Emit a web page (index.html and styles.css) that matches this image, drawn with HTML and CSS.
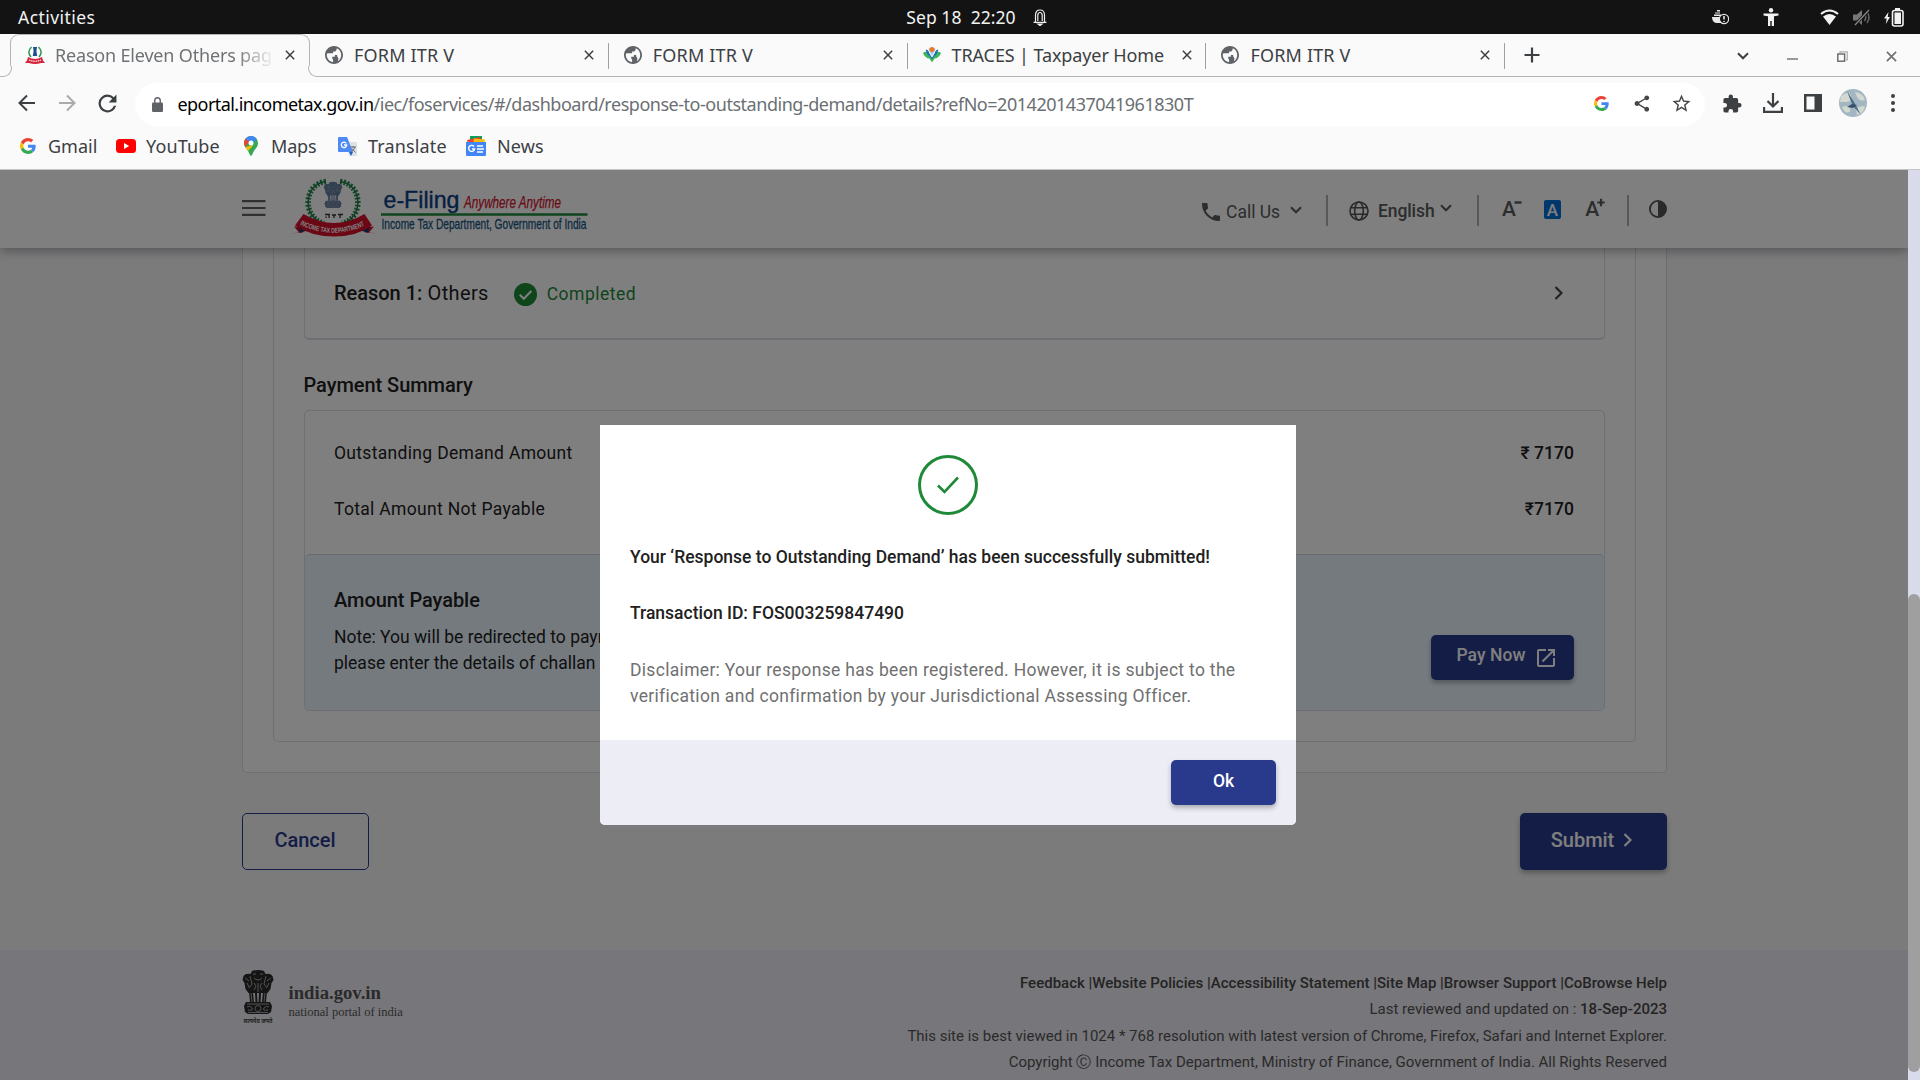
FILE: index.html
```html
<!DOCTYPE html>
<html lang="en">
<head>
<meta charset="utf-8">
<title>Response to Outstanding Demand</title>
<link rel="stylesheet" href="styles.css">
</head>
<body>
<svg class="defs" aria-hidden="true">
  <symbol id="i-world" viewBox="2 2 20 20"><path d="M12 2C6.480 2 2 6.480 2 12s4.480 10 10 10 10-4.480 10-10S17.520 2 12 2zm-1 17.930c-3.950-.49-7-3.850-7-7.930 0-.62.08-1.210.21-1.790L6.500 10H11l2 2v2h-3v2l1 1v2.930zM20 12c0 3-1.500 5.600-3.800 7l.8-3-1.500-2.500V12H13l-2-2V8h2.500l1.500-2V4.600c3 1.200 5 4 5 7.400z"/></symbol>
  <symbol id="i-x" viewBox="0 0 12 12"><path d="M1 1l10 10M11 1L1 11" fill="none" stroke="currentColor" stroke-width="1.800"/></symbol>
  <symbol id="i-chev" viewBox="0 0 12 8"><path d="M1 1.300l5 5 5-5" fill="none" stroke="currentColor" stroke-width="2"/></symbol>
  <symbol id="i-next" viewBox="0 0 9 14"><path d="M1.500 1l6 6-6 6" fill="none" stroke="currentColor" stroke-width="2.200"/></symbol>
  <symbol id="i-google" viewBox="0 0 48 48"><path fill="#ea4335" d="M24 9.500c3.540 0 6.710 1.220 9.210 3.600l6.850-6.850C35.900 2.380 30.470 0 24 0 14.620 0 6.510 5.380 2.560 13.220l7.980 6.190C12.430 13.720 17.740 9.500 24 9.500z"/><path fill="#4285f4" d="M46.980 24.550c0-1.570-.15-3.090-.38-4.550H24v9.020h12.940c-.58 2.960-2.260 5.480-4.780 7.180l7.730 6c4.510-4.180 7.090-10.360 7.090-17.650z"/><path fill="#fbbc05" d="M10.530 28.590c-.48-1.450-.76-2.990-.76-4.590s.27-3.140.76-4.590l-7.980-6.190C.92 16.460 0 20.120 0 24c0 3.880.92 7.540 2.560 10.780l7.970-6.190z"/><path fill="#34a853" d="M24 48c6.480 0 11.930-2.130 15.890-5.810l-7.730-6c-2.150 1.450-4.920 2.300-8.160 2.300-6.260 0-11.570-4.220-13.470-9.910l-7.980 6.190C6.510 42.620 14.620 48 24 48z"/></symbol>
  <symbol id="i-lions" viewBox="0 0 32 48">
    <path d="M10 1q6-2 12 0l1.500 3q5-1 7 2l1 4-2 3-1 6-3 4h-19l-3-4-1-6-2-3 1-4q2-3 7-2z"/>
    <path d="M7 22h4l1 10H8zM13 23h2l.5 10h-2zM17 23h2l-.5 10h-2zM21 22h4l-1 10h-4z"/>
    <path d="M4 32h24l2 4-1 6-3 2H6l-3-2-1-6z"/>
    <g class="lions-cut" fill="none" stroke-width="1"><path d="M11 4h3M18 4h3M12 8q4 4 8 0M3 8l4 3M29 8l-4 3M8 6l2 8-3 4M24 6l-2 8 3 4M12 13l2 3-2 4M20 13l-2 3 2 4M16 13v9M5 13l2 4M27 13l-2 4M9 23l1 9M23 23l-1 9M5 34h22M6 42.500h20"/><circle cx="16" cy="38.500" r="3"/><path d="M5 37q3-2 5 1t-4 2M27 37q-3-2-5 1t4 2"/></g>
  </symbol>
</svg>

<div class="desktop-bar">
  <span class="activities">Activities</span>
  <span class="clock">Sep 18&nbsp; 22:20
    <svg width="14" height="17" viewBox="0 0 14 17" fill="none" stroke="#eee" stroke-width="1.200"><path d="M2.500 13V6q0-5 4.500-5t4.500 5v7M4.800 12V6.500q0-3 2.200-3t2.200 3V12M.5 13.400h13"/><path d="M5 15h4l-2 1.500z" fill="#fff"/></svg>
  </span>
  <span class="tray">
    <svg width="17" height="15" viewBox="0 0 17 15"><path fill="#e8e8e8" d="M3 2.500h5v1H3zM2 4.500h7v1.500H2zM5 0h3v1.500H5zM0 7h10v6H4q-4-1-4-6z"/><circle cx="12" cy="9" r="4.600" fill="#131313" stroke="#e8e8e8" stroke-width="1.200"/><path d="M12 6v3.500M12 11v1" stroke="#fff" stroke-width="1.400"/></svg>
    <svg class="person" width="16" height="18" viewBox="0 0 16 18" fill="#f2f2f2"><circle cx="8" cy="2.300" r="2.200"/><path d="M.5 5.500h15v2l-4.500.7V18H8.700v-5H7.300v5H5V8.200L.5 7.500z"/></svg>
    <svg class="wifi" width="19" height="16" viewBox="0 0 19 16"><path d="M1 5q8.500-7 17 0" fill="none" stroke="#f2f2f2" stroke-width="2"/><path d="M3 7.500q6.500-5 13 0L9.500 16z" fill="#f2f2f2"/></svg>
    <svg class="mute" width="18" height="17" viewBox="0 0 18 17"><path d="M0 5.500h4L9 1v15l-5-4.500H0z" fill="#777"/><path d="M11.500 5q2.500 3.500 0 7M14 3q4 5.500 0 11" fill="none" stroke="#666" stroke-width="1.500"/><path d="M2 16L16 1" stroke="#131313" stroke-width="3"/><path d="M2 16L16 1" stroke="#888" stroke-width="1.300"/></svg>
    <svg class="battery" width="20" height="19" viewBox="0 0 20 19"><path d="M4.500 4L0 10.500h2.700L1.800 16 6 9H3.700z" fill="#f2f2f2"/><rect x="8.500" y="2.500" width="10.500" height="15.500" rx="2" fill="none" stroke="#f2f2f2" stroke-width="1.600"/><path d="M10.500 4.500h6.500v11.500h-6.500zM11 0h5v2h-5z" fill="#f2f2f2"/></svg>
  </span>
</div>

<div class="tab-strip">
  <div class="tab tab-active">
    <svg class="favicon" viewBox="0 0 20 20"><path d="M6.500 2Q1.500 7 6 12M13.500 2q5 5 .5 10" fill="none" stroke="#2f9a55" stroke-width="1.500"/><path d="M8 2h4l-.6 4 .8 5H7.800l.8-5z" fill="#1d4f92"/><path d="M3 12q7 4 14 0l1 3.500 2 2.500h-4q-6 2-12 0H0l2-2.500z" fill="#d6223c"/><path d="M4 15q6 2.500 12 0" stroke="#fff" stroke-width="1.200" stroke-dasharray="1.500 .7" fill="none"/></svg>
    <span class="tab-title fade">Reason Eleven Others pag</span>
    <svg class="tab-close"><use href="#i-x"/></svg>
  </div>
  <div class="tab"><svg class="favicon"><use href="#i-world"/></svg><span class="tab-title">FORM ITR V</span><svg class="tab-close"><use href="#i-x"/></svg></div>
  <div class="tab"><svg class="favicon"><use href="#i-world"/></svg><span class="tab-title">FORM ITR V</span><svg class="tab-close"><use href="#i-x"/></svg></div>
  <div class="tab"><svg class="favicon" viewBox="0 0 20 20"><path d="M0 8q3-3 5 0l5 5 5-5q2-3 5 0-2 5-7 6l-3 4-3-4Q2 13 0 8z" fill="#3fb65a"/><path d="M3 4q3 0 4 4l3 5 3-5q1-4 4-4-1 6-5 8l-2 3-2-3Q4 10 3 4z" fill="#1c6fb8"/><path d="M6 3l4 8 4-8q-4-2-8 0z" fill="#9dd0ee"/><circle cx="10" cy="4" r="2.800" fill="#ee7623"/></svg><span class="tab-title tight">TRACES | Taxpayer Home</span><svg class="tab-close"><use href="#i-x"/></svg></div>
  <div class="tab"><svg class="favicon"><use href="#i-world"/></svg><span class="tab-title">FORM ITR V</span><svg class="tab-close"><use href="#i-x"/></svg></div>
  <svg class="new-tab" width="16" height="16" viewBox="0 0 16 16"><path d="M8 .5v15M.5 8h15" stroke="#3c4043" stroke-width="2.200"/></svg>
  <div class="window-controls">
    <svg width="12" height="8" class="dark"><use href="#i-chev"/></svg>
    <svg width="11" height="9" viewBox="0 0 11 9"><path d="M0 7h11" stroke="#808080" stroke-width="1.600"/></svg>
    <svg width="11" height="11" viewBox="0 0 11 11"><path d="M3 2V.8h7.200v8H9" fill="none" stroke="#aaa" stroke-width="1.200"/><rect x=".8" y="3" width="6.800" height="7.200" fill="none" stroke="#666" stroke-width="1.400"/></svg>
    <svg width="11" height="11"><use href="#i-x"/></svg>
  </div>
</div>

<div class="toolbar">
  <div class="slots">
    <svg width="18" height="18" viewBox="0 0 18 18" fill="none" stroke="#3c4043" stroke-width="2"><path d="M17 9H2M9 1.500L1.500 9 9 16.500"/></svg>
    <svg width="18" height="18" viewBox="0 0 18 18" fill="none" stroke="#a9abad" stroke-width="2"><path d="M1 9h15M9 1.500L16.500 9 9 16.500"/></svg>
    <svg width="19" height="19" viewBox="3.500 3.500 17 17" fill="#3c4043"><path d="M17.650 6.350A7.958 7.958 0 0 0 12 4a8 8 0 1 0 7.730 10h-2.080A6 6 0 1 1 12 6c1.660 0 3.140.69 4.220 1.780L13 11h7V4l-2.350 2.350z"/></svg>
  </div>
  <div class="url-bar">
    <svg class="lock" width="11" height="15" viewBox="0 0 12 15" preserveAspectRatio="none"><path d="M1.300 5.500h9.400q1.300 0 1.300 1.300v6.900q0 1.300-1.300 1.300H1.300Q0 15 0 13.700V6.800Q0 5.500 1.300 5.500z" fill="#5f6368"/><path d="M3 6V3.800a3 3 0 0 1 6 0V6" fill="none" stroke="#5f6368" stroke-width="1.500"/></svg>
    <span class="url"><span class="host">eportal.incometax.gov.in</span><span class="path">/iec/foservices/#/dashboard/response-to-outstanding-demand/details?refNo=2014201437041961830T</span></span>
    <div class="slots">
      <svg width="15" height="15"><use href="#i-google"/></svg>
      <svg width="17" height="17" viewBox="2 1.500 19 21" fill="#444746"><path d="M18 16.080c-.76 0-1.440.3-1.960.77L8.910 12.700c.05-.23.09-.46.09-.7s-.04-.47-.09-.7l7.050-4.110c.54.5 1.250.81 2.040.81 1.660 0 3-1.340 3-3s-1.340-3-3-3-3 1.340-3 3c0 .24.04.47.09.7L8.040 9.810C7.500 9.310 6.790 9 6 9c-1.660 0-3 1.340-3 3s1.340 3 3 3c.79 0 1.500-.31 2.040-.81l7.120 4.160c-.05.21-.08.43-.08.650 0 1.610 1.310 2.920 2.920 2.920s2.920-1.310 2.920-2.920-1.310-2.920-2.920-2.920z"/></svg>
      <svg width="19" height="19" viewBox="1.500 1.500 21 21" fill="#444746"><path d="M22 9.240l-7.190-.62L12 2 9.190 8.630 2 9.240l5.460 4.730L5.820 21 12 17.270 18.180 21l-1.630-7.030L22 9.240zM12 15.400l-3.760 2.270 1-4.280-3.320-2.880 4.380-.38L12 6.100l1.710 4.040 4.380.38-3.320 2.880 1 4.280L12 15.400z"/></svg>
    </div>
  </div>
  <div class="slots">
    <svg width="19" height="19" viewBox="1.500 .5 22 22" fill="#3c4043"><path d="M20.500 11H19V7c0-1.100-.9-2-2-2h-4V3.500a2.500 2.500 0 0 0-5 0V5H4c-1.100 0-2 .9-2 2v3.800h1.500a2.700 2.700 0 0 1 0 5.400H2V20c0 1.100.9 2 2 2h3.800v-1.500a2.700 2.700 0 0 1 5.400 0V22H17c1.100 0 2-.9 2-2v-4h1.500a2.500 2.500 0 0 0 0-5z"/></svg>
    <svg width="20" height="20" viewBox="0 0 20 20" fill="none" stroke="#3c4043" stroke-width="2.200"><path d="M10 0v13M4.500 8l5.500 5.500L15.500 8M1.100 14v4.900h17.800V14"/></svg>
    <svg width="18" height="18" viewBox="0 0 18 18"><path fill="#3c4043" d="M0 0h18v18H0z"/><path fill="#fafafa" d="M2.500 2.500h8v13h-8z"/></svg>
    <svg width="28" height="28" viewBox="0 0 28 28"><circle cx="14" cy="14" r="14" fill="#a3b7c3"/><path d="M2 7q8-6 10 0t-6 6-5 0zM16 3q8 1 10 8-5 2-8-3zM3 18q7-3 8 2t-5 3zM17 20q6-5 9-2-2 7-8 8z" fill="#d3d8d0"/><path d="M8 2l7 11 7 13-8-9-3-7z" fill="#4a6c8a"/><path d="M8 18l5-3 5 1-4 3z" fill="#34506a"/></svg>
    <svg width="6" height="20" viewBox="0 0 6 20" fill="#3c4043"><circle cx="3" cy="3" r="2"/><circle cx="3" cy="10" r="2"/><circle cx="3" cy="17" r="2"/></svg>
  </div>
</div>

<div class="bookmarks">
  <span class="bm bm-gmail"><svg width="16" height="16"><use href="#i-google"/></svg>Gmail</span>
  <span class="bm bm-youtube"><svg width="20" height="14" viewBox="0 0 20 14"><rect width="20" height="14" rx="3.500" fill="#f00"/><path d="M8 4l5.200 3L8 10z" fill="#fff"/></svg>YouTube</span>
  <span class="bm bm-maps"><svg width="14" height="20" viewBox="0 0 14 20"><path d="M7 0a7 7 0 0 0-7 7c0 3 1.500 4.500 3 6.500C5 16 6 20 7 20s2-4 4-6.500c1.500-2 3-3.500 3-6.500a7 7 0 0 0-7-7z" fill="#34a853"/><path d="M1.600 2.500L5 5.500 1.500 11Q0 9 0 7q0-2.500 1.600-4.500z" fill="#ea4335"/><path d="M1.500 11L9.500 9 4 15z" fill="#fbbc04"/><path d="M1.600 2.500Q3.500 0 7 0q3.500 0 5.700 3L9 7 5 5.500z" fill="#4285f4"/><circle cx="7" cy="7" r="2.500" fill="#fff"/></svg>Maps</span>
  <span class="bm bm-translate"><svg width="19" height="19" viewBox="0 0 19 19"><path d="M8 5h10q1 0 1 1v12q0 1-1 1h-7z" fill="#dfe1e5"/><path d="M1 0h8l6 15H1q-1 0-1-1V1q0-1 1-1z" fill="#4c8bf5"/><path d="M11 15h4l-2 4z" fill="#1f5fc9"/><path d="M8.300 6.500A2.700 2.700 0 1 0 8.700 8H6" fill="none" stroke="#fff" stroke-width="1.300"/><path d="M12 10h6M15 9v1.500M17 10q-1 3-4 5M14 11.500l3.500 4" stroke="#6b7075" stroke-width="1" fill="none"/></svg>Translate</span>
  <span class="bm bm-news"><svg width="20" height="20" viewBox="0 0 20 20"><path d="M4 0h12v5H4z" fill="#0c9d58"/><path d="M1 4l13-3 2 7H2z" fill="#ea4335"/><path d="M8 2.500l11 1-1 5H7z" fill="#fbbc04"/><path d="M0 6h20v13q0 1-1 1H1q-1 0-1-1z" fill="#4285f4"/><path d="M8 10.500A3 3 0 1 0 8.600 13H6" fill="none" stroke="#fff" stroke-width="1.400"/><path d="M11 10h6M11 13h7M11 16h6" stroke="#fff" stroke-width="1.500"/></svg>News</span>
</div>

<div class="viewport">
  <div class="page">
    <header class="site-header">
      <svg class="menu" width="24" height="16" viewBox="0 0 24 16"><path d="M0 1.200h23.500M0 8h23.500M0 14.800h23.500" stroke="#636363" stroke-width="2.200"/></svg>
      <svg class="logo" width="296" height="60" viewBox="0 0 296 60">
        <path d="M33 1.500C10 4 9 38 31 43.500M47 1.500C70 4 71 38 49 43.500" fill="none" stroke="#2e8b57" stroke-width="5.500" stroke-dasharray="2 1.600"/>
        <path d="M33 1.500C10 4 9 38 31 43.500q9 2 18 0M47 1.500C70 4 71 38 49 43.500" fill="none" stroke="#1f7d46" stroke-width="1.400"/>
        <svg class="logo-lions" x="30.500" y="0" width="19" height="32"><use href="#i-lions" fill="#5f7ca3"/></svg>
        <path d="M32 34.500h5M39 35h4M45 34.500h5M33 36.500v1.500M36 35v3M41 35v3M47 35v3" stroke="#333" stroke-width="1.300"/>
        <path d="M-2 53.500l8-1-5-6 10 1-1 5zM84 53.500l-8-1 5-6-10 1 1 5z" fill="#d8102c"/>
        <path d="M5 46l8-2v7l-6 1.500zM77 46l-8-2v7l6 1.500z" fill="#17386f"/>
        <path d="M10.500 34Q41 52 71.500 34L79 45.500Q64 56.500 41 56.500 18 56.500 2 45.500z" fill="#d8102c"/>
        <path id="ribbon" d="M7 44.500Q41 61.500 76 43.500" fill="none"/>
        <text class="ribbon-text" textLength="67" lengthAdjust="spacingAndGlyphs"><textPath href="#ribbon">INCOME TAX DEPARTMENT</textPath></text>
        <text class="logo-name" x="90.500" y="27.500" textLength="76" lengthAdjust="spacingAndGlyphs">e-Filing</text>
        <text class="logo-tag" x="171" y="28" textLength="97" lengthAdjust="spacingAndGlyphs">Anywhere Anytime</text>
        <path d="M88 34.500h206.500" stroke="#1f8a3a" stroke-width="2.600"/>
        <text class="logo-dept" x="88.500" y="49" textLength="205" lengthAdjust="spacingAndGlyphs">Income Tax Department, Government of India</text>
      </svg>
      <div class="header-tools">
        <span class="tool call"><svg width="18" height="18" viewBox="3 3 18 18" fill="#5a5a5a"><path d="M6.620 10.790c1.440 2.830 3.760 5.140 6.590 6.590l2.200-2.200c.27-.27.67-.36 1.020-.24 1.120.37 2.330.57 3.570.57.55 0 1 .45 1 1V20c0 .55-.45 1-1 1-9.390 0-17-7.610-17-17 0-.55.45-1 1-1h3.500c.55 0 1 .45 1 1 0 1.250.2 2.450.57 3.570.11.35.03.74-.25 1.020l-2.200 2.200z"/></svg><span class="call-label">Call Us</span><svg width="12" height="8"><use href="#i-chev"/></svg></span>
        <span class="rule"></span>
        <span class="tool lang"><svg width="20" height="20" viewBox="0 0 20 20" fill="none" stroke="#555" stroke-width="1.600"><circle cx="10" cy="10" r="9"/><ellipse cx="10" cy="10" rx="4.300" ry="9"/><path d="M1.500 6.800h17M1.500 13.200h17"/></svg><b class="lang-label">English</b><svg class="lang-chev" width="12" height="8"><use href="#i-chev"/></svg></span>
        <span class="rule"></span>
        <span class="tool sizes"><span class="size">A<svg width="8" height="9" viewBox="0 0 8 9"><path d="M.5 4.500h7" stroke="#5a5a5a" stroke-width="2.400"/></svg></span><span class="size size-on">A</span><span class="size">A<svg width="8" height="9" viewBox="0 0 8 9"><path d="M.3 4.500h7.400M4 .8v7.400" stroke="#5a5a5a" stroke-width="2.200"/></svg></span></span>
        <span class="rule"></span>
        <svg class="contrast" width="18" height="18" viewBox="0 0 18 18"><circle cx="9" cy="9" r="8.100" fill="none" stroke="#555" stroke-width="1.800"/><path d="M9 1v16A8 8 0 0 0 9 1z" fill="#555"/></svg>
      </div>
    </header>

    <main class="outer-card">
      <div class="inner-card">
        <div class="reason"><span><b>Reason 1:</b> Others</span>
          <svg class="tick" width="23" height="23" viewBox="0 0 23 23"><circle cx="11.500" cy="11.500" r="11.500" fill="#1e8a37"/><path d="M5.800 11.800l4 4 7.500-7.800" fill="none" stroke="#fff" stroke-width="2"/></svg>
          <span class="completed">Completed</span>
          <svg class="go" width="9" height="14"><use href="#i-next"/></svg>
        </div>
        <h2>Payment Summary</h2>
        <section class="summary">
          <div class="row"><span>Outstanding Demand Amount</span><b>₹ 7170</b></div>
          <div class="row"><span>Total Amount Not Payable</span><b>₹7170</b></div>
          <div class="payable">
            <div class="payable-text">
              <h3>Amount Payable</h3>
              <p>Note: You will be redirected to payment gateway,<br>please enter the details of challan</p>
            </div>
            <button class="btn pay">Pay Now <svg width="18" height="18" viewBox="3 3 18 18" fill="#fff"><path d="M19 19H5V5h7V3H5a2 2 0 0 0-2 2v14a2 2 0 0 0 2 2h14c1.100 0 2-.9 2-2v-7h-2v7zM14 3v2h3.590l-9.830 9.830 1.410 1.410L19 6.410V10h2V3h-7z"/></svg></button>
          </div>
        </section>
      </div>
    </main>

    <div class="actions">
      <button class="btn cancel">Cancel</button>
      <button class="btn submit">Submit <svg width="9" height="14"><use href="#i-next"/></svg></button>
    </div>

    <footer class="site-footer">
      <div class="portal">
        <div class="emblem"><svg width="32" height="48"><use href="#i-lions" fill="#2a2a2a"/></svg><span>सत्यमेव जयते</span></div>
        <div class="portal-text"><strong>india.gov.in</strong><span>national portal of india</span></div>
      </div>
      <div class="legal">
        <p class="links"><b>Feedback |Website Policies |Accessibility Statement |Site Map |Browser Support |CoBrowse Help</b></p>
        <p>Last reviewed and updated on : <b>18-Sep-2023</b></p>
        <p>This site is best viewed in 1024 * 768 resolution with latest version of Chrome, Firefox, Safari and Internet Explorer.</p>
        <p>Copyright Ⓒ Income Tax Department, Ministry of Finance, Government of India. All Rights Reserved</p>
      </div>
    </footer>

    <div class="backdrop">
      <div class="dialog">
        <div class="dialog-body">
          <svg class="success" width="60" height="60" viewBox="0 0 60 60" fill="none" stroke="#1e8a37" stroke-width="3"><circle cx="30" cy="30" r="28.500"/><path d="M20 30.500l6.500 6.500L40 22.500" stroke-width="2.600"/></svg>
          <p class="strong">Your ‘Response to Outstanding Demand’ has been successfully submitted!</p>
          <p class="strong">Transaction ID: FOS003259847490</p>
          <p class="disclaimer">Disclaimer: Your response has been registered. However, it is subject to the verification and confirmation by your Jurisdictional Assessing Officer.</p>
        </div>
        <div class="dialog-foot"><button class="btn ok">Ok</button></div>
      </div>
    </div>
  </div>
  <div class="scrollbar"><div class="thumb"></div></div>
</div>
</body>
</html>
```
FILE: styles.css
```css
* { box-sizing: border-box; }
body { margin: 0; width: 1920px; height: 1080px; overflow: hidden; display: flex; flex-direction: column; background: #fafafa; font-family: Roboto, sans-serif; font-size: 17.5px; color: #212121; }
b, strong { font-weight: 500; }
p, h2, h3 { margin: 0; }
svg { display: block; flex: none; }
.defs { position: absolute; width: 0; height: 0; }

/* desktop bar */
.desktop-bar { height: 34px; flex: none; background: #131313; color: #f2f2f2; font: 17.5px/34px "Noto Sans", sans-serif; display: grid; grid-template-columns: 1fr auto 1fr; align-items: center; padding: 0 16px 0 18px; }
.activities { letter-spacing: .45px; }
.clock { display: flex; gap: 17px; align-items: center; letter-spacing: .05px; margin-left: 31px; }
.tray { display: flex; justify-content: flex-end; align-items: center; }
.person { margin-left: 34px; }
.wifi { margin-left: 41px; }
.mute { margin-left: 14px; }
.battery { margin-left: 13px; }

/* tabs */
.tab-strip { height: 43px; flex: none; display: flex; border-bottom: 1px solid #b4b4b4; padding-left: 10px; font: 18px/42px "Noto Sans", sans-serif; color: #3c4043; }
.tab { width: 298.800px; display: flex; align-items: center; padding-left: 15px; position: relative; }
.tab:not(.tab-active)::after { content: ""; position: absolute; right: 0; top: 9px; width: 1px; height: 26px; background: #a0a0a0; }
.tab-active { width: 300px; height: 43px; border: 1px solid #b4b4b4; border-bottom: 0; border-radius: 9px 9px 0 0; padding: 0 0 2px 14px; color: #6f7275; background: #fafafa; }
.tab-active::before, .tab-active::after { content: ""; position: absolute; bottom: 0; width: 10px; height: 10px; border: 0 solid #b4b4b4; border-bottom-width: 1px; background: #fafafa; }
.tab-active::before { left: -10px; border-right-width: 1px; border-bottom-right-radius: 9px; box-shadow: 3px 3px 0 2px #fafafa; }
.tab-active::after { right: -10px; border-left-width: 1px; border-bottom-left-radius: 9px; box-shadow: -3px 3px 0 2px #fafafa; }
.favicon { width: 18px; height: 18px; fill: #5f6368; }
.tab-active .favicon { width: 20px; height: 20px; }
.tab-title { margin-left: 11px; width: 224px; white-space: nowrap; letter-spacing: .18px; }
.tab-title.tight { letter-spacing: -.11px; }
.tab-title.fade { margin-left: 10px; width: 220px; margin-right: 4px; letter-spacing: -.18px; -webkit-mask-image: linear-gradient(90deg, #000 82%, transparent 100%); mask-image: linear-gradient(90deg, #000 82%, transparent 100%); }
.tab-close { width: 10px; height: 10px; margin-left: 6px; color: #3c4043; }
.new-tab { margin: 13px 0 0 19px; }
.window-controls { margin-left: auto; display: flex; align-items: center; gap: 38.500px; padding-right: 23px; color: #707070; height: 44px; }
.window-controls .dark { color: #3c4043; }

/* toolbar */
.toolbar { height: 52px; flex: none; display: flex; align-items: center; padding: 0 7.500px 0 7px; }
.slots { display: grid; grid-auto-flow: column; grid-auto-columns: 40px; align-items: center; }
.slots > svg { margin: auto; }
.url-bar { width: 1570px; height: 43px; border-radius: 22px; background: #fff; margin: 2px 8px 0 8px; display: flex; align-items: center; padding: 0 3px 0 17px; font: 18px/42px "Noto Sans", sans-serif; }
.url-bar .slots { padding-bottom: 1px; }
.url { margin: -1px 0 0 14.500px; flex: 1; white-space: nowrap; letter-spacing: -.475px; color: #6b6f73; }
.host { color: #000; letter-spacing: -.56px; }

/* bookmarks */
.bookmarks { height: 41px; flex: none; border-bottom: 1px solid #c4c4c4; display: flex; align-items: center; padding: 0 0 6px 20px; font: 18px/24px "Noto Sans", sans-serif; color: #3c4043; }
.bm { display: flex; align-items: center; gap: 10px; letter-spacing: .15px; }
.bm-gmail { gap: 12px; width: 96px; letter-spacing: 0; }
.bm-youtube { width: 128px; }
.bm-maps { gap: 13px; width: 94px; letter-spacing: -.2px; }
.bm-translate { gap: 11px; width: 128px; }
.bm-news { gap: 11px; }

/* page */
.viewport { flex: 1; min-height: 0; display: flex; }
.page { width: 1908px; position: relative; display: flex; flex-direction: column; background: #f6f6f9; overflow: hidden; }
.site-header { height: 78px; flex: none; background: #fff; box-shadow: 0 3px 10px rgba(0,0,0,.32); display: flex; align-items: center; padding: 0 241px 0 242px; position: relative; color: #5a5a5a; }
.menu { margin-bottom: 2px; }
.logo { margin: 1px 0 0 27px; overflow: visible; }
.lions-cut { stroke: #a5a5a5; }
.logo-lions .lions-cut { stroke: #dfe5ee; }
.ribbon-text { font: bold 7px "Liberation Sans", sans-serif; fill: #fff; }
.logo-name { font: 24px "Liberation Sans", sans-serif; fill: #0b3f86; stroke: #0b3f86; stroke-width: .4px; }
.logo-tag { font: italic 16px "Liberation Sans", sans-serif; fill: #d4142f; stroke: #d4142f; stroke-width: .25px; }
.logo-dept { font: 14.500px "Liberation Sans", sans-serif; fill: #17557f; stroke: #17557f; stroke-width: .3px; }
.header-tools { margin-left: auto; display: flex; align-items: center; }
.tool { display: flex; align-items: center; }
.rule { width: 2px; height: 31px; background: #b0b0b0; margin: 2px 0 0; }
.call { width: 124px; padding-top: 5px; }
.call-label { margin-left: 6px; width: 64px; }
.call svg:last-child { margin-bottom: 3px; }
.lang { width: 149px; padding: 3px 0 0 21px; }
.lang-label { margin-left: 9px; width: 62px; letter-spacing: -.1px; }
.lang-chev { margin-bottom: 5px; }
.sizes { width: 148px; padding-left: 23px; font: 500 21px/21px Roboto, sans-serif; }
.size { width: 43px; height: 20px; display: flex; }
.size svg { margin: -1px 0 0 -2px; }
.size-on { width: 18px; height: 19px; background: #0070dc; color: #fff; border-radius: 2px; justify-content: center; font-size: 17px; margin-right: 24px; }
.contrast { margin-left: 20px; }

.outer-card { width: 1425px; height: 525px; flex: none; margin-left: 242px; background: #fff; border: 1px solid #dcdcea; border-top: 0; border-radius: 0 0 5px 5px; padding: 0 30px; }
.inner-card { height: 494px; border: 1px solid #dcdcea; border-top: 0; border-radius: 0 0 5px 5px; padding: 0 30px 0 29.500px; }
.reason { height: 92px; border: 1px solid #dcdcea; border-top: 0; border-bottom-width: 2px; border-radius: 0 0 5px 5px; padding: 0 41px 0 29.500px; display: flex; align-items: center; font-size: 20px; letter-spacing: .35px; }
.reason b { letter-spacing: -.02px; }
.tick { margin-left: 25px; margin-top: 2px; }
.completed { margin-left: 10px; font-size: 17.5px; letter-spacing: .5px; color: #1e8a37; padding-top: 1px; }
.go { margin-left: auto; color: #444; }
h2, h3 { font-size: 20px; font-weight: 500; letter-spacing: -.05px; }
h2 { line-height: 24px; margin: 33px 0 13px; }
.summary { height: 301px; border: 1px solid #dcdcea; border-radius: 5px; padding-top: 14px; display: flex; flex-direction: column; }
.row { height: 56px; padding: 0 30px 0 29.500px; display: flex; justify-content: space-between; align-items: center; letter-spacing: .32px; }
.row b { letter-spacing: .05px; }
.payable { margin: 17px 0 0; flex: 1; background: #eaf5ff; border-top: 1px solid #d2d4e4; border-radius: 5px; display: flex; justify-content: space-between; padding: 32px 30px 0 29.500px; }
.payable h3 { line-height: 26px; margin-bottom: 11px; }
.payable p { line-height: 26px; }
.btn { font: 500 17.5px/1 Roboto, sans-serif; border: 0; border-radius: 5px; background: #293a8d; color: #fff; display: flex; align-items: center; justify-content: center; padding: 0; box-shadow: 0 3px 5px rgba(0,0,0,.28); }
.pay { width: 143px; height: 45px; margin-top: 48px; gap: 12px; padding: 0 0 4px 7px; letter-spacing: .05px; }
.pay svg { margin-top: 5px; }

.actions { display: flex; justify-content: space-between; margin: 40px 241px 0 242px; height: 137px; flex: none; align-items: flex-start; }
.actions .btn { height: 57px; font-size: 20px; letter-spacing: -.05px; padding-bottom: 3px; }
.actions .cancel { width: 127px; background: transparent; color: #293a8d; border: 1px solid #293a8d; box-shadow: none; padding-right: 1px; }
.actions .submit { width: 147px; gap: 9px; padding-right: 4px; }

.site-footer { flex: 1; background: #eeedf5; display: flex; justify-content: space-between; padding: 20px 241px 0 242px; color: #555; }
.portal { display: flex; gap: 14.500px; }
.emblem { width: 32px; display: flex; flex-direction: column; align-items: center; }
.emblem span { font: 700 5.500px/6px "Noto Sans", "Noto Sans Devanagari", sans-serif; white-space: nowrap; color: #444; }
.portal-text { display: flex; flex-direction: column; font-family: "Liberation Serif", serif; padding-top: 12px; }
.portal-text strong { font: bold 18.700px/22px "Liberation Serif", serif; }
.portal-text span { font-size: 12.500px; line-height: 17px; }
.legal { text-align: right; font-size: 15px; line-height: 26.300px; }
.legal .links { letter-spacing: .01px; }
.legal b { color: #484848; }

.backdrop { position: absolute; inset: 0; background: rgba(0,0,0,.5); display: flex; align-items: center; justify-content: center; padding-right: 12px; }
.dialog { width: 696px; height: 400px; background: #fff; border-radius: 0 0 5px 5px; overflow: hidden; display: flex; flex-direction: column; }
.dialog-body { height: 315px; padding: 30px 30px 0; line-height: 26px; }
.success { margin: 0 auto 29px; }
.strong { font-weight: 500; margin-bottom: 30px; }
.disclaimer { color: #707070; letter-spacing: .31px; padding-top: 1px; }
.dialog-foot { flex: 1; background: #ededf6; display: flex; justify-content: flex-end; padding: 20px 20px 0; }
.ok { width: 105px; height: 45px; padding-bottom: 2px; }

.scrollbar { width: 12px; background: #d9dbea; padding-top: 424px; }
.thumb { height: 478px; border-radius: 6px; background: #9f9f9f; }
```
